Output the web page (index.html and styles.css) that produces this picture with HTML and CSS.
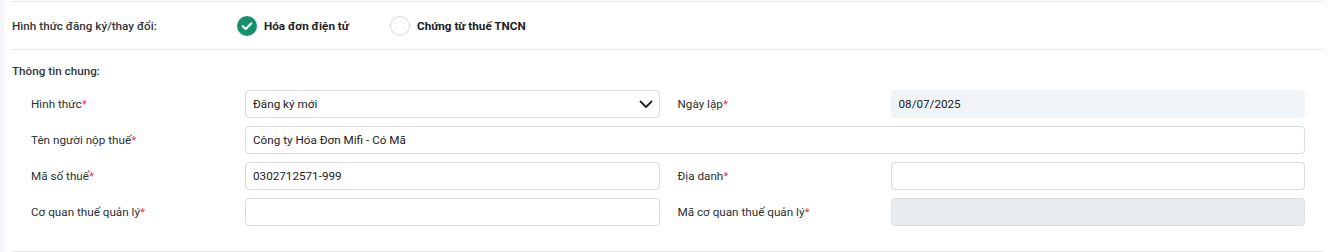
FILE: index.html
```html
<!DOCTYPE html>
<html lang="vi">

<head>
    <meta charset="utf-8" />
    <title>Đăng ký/thay đổi thông tin</title>
    <link rel="stylesheet" href="styles.css">
</head>

<body>

    <div class="card">
        <div class="reg-row">
            <div class="reg-label">Hình thức đăng ký/thay đổi:</div>
            <div class="radio-group">
                <label class="radio-item checked">
                    <span class="radio-mark">
                        <svg width="20" height="20" viewBox="0 0 20 20">
                            <circle cx="10" cy="10" r="10" fill="#17916c" />
                            <path d="M5.8 10.2 L8.7 13 L14.2 7.4" fill="none" stroke="#fff" stroke-width="2.2" stroke-linecap="round" stroke-linejoin="round" />
                        </svg>
                    </span>
                    Hóa đơn điện tử
                </label>
                <label class="radio-item">
                    <span class="radio-mark empty"></span>
                    Chứng từ thuế TNCN
                </label>
            </div>
        </div>

        <div class="section">
            <div class="section-title">Thông tin chung:</div>

            <div class="form-grid">
                <div class="field-label">Hình thức<span class="req">*</span></div>
                <div class="select-box">
                    <span>Đăng ký mới</span>
                    <svg width="14" height="14" viewBox="0 0 14 14">
                        <path d="M1.5 4.5 L7 10 L12.5 4.5" fill="none" stroke="#1f2328" stroke-width="1.8" stroke-linecap="round" stroke-linejoin="round" />
                    </svg>
                </div>
                <div class="field-label right">Ngày lập<span class="req">*</span></div>
                <div class="text-box readonly">08/07/2025</div>

                <div class="field-label">Tên người nộp thuế<span class="req">*</span></div>
                <div class="text-box wide">Công ty Hóa Đơn Mifi - Có Mã</div>

                <div class="field-label">Mã số thuế<span class="req">*</span></div>
                <div class="text-box">0302712571-999</div>
                <div class="field-label right">Địa danh<span class="req">*</span></div>
                <div class="text-box"></div>

                <div class="field-label">Cơ quan thuế quản lý<span class="req">*</span></div>
                <div class="text-box"></div>
                <div class="field-label right">Mã cơ quan thuế quản lý<span class="req">*</span></div>
                <div class="text-box disabled"></div>
            </div>
        </div>
    </div>

</body>

</html>
```

FILE: styles.css
```css
* {
    box-sizing: border-box;
    font-family: Roboto, "Noto Sans", sans-serif;
}

body {
    margin: 0;
    background: #f4f6f9;
    color: #2b2f33;
    font-size: 11.7px;
}

.card {
    margin-left: 4px;
    height: 252px;
    padding: 1px 6px 0 8px;
    background: #fff;
}

.reg-row {
    display: flex;
    align-items: center;
    height: 49px;
    border-top: 1px solid #e6e8eb;
    border-bottom: 1px solid #e6e8eb;
}

.reg-label {
    width: 225px;
    font-weight: 500;
    color: #33373b;
}

.radio-group {
    display: flex;
    align-items: center;
}

.radio-item {
    display: flex;
    align-items: center;
    gap: 7px;
    width: 153px;
    font-weight: 700;
    color: #1d2125;
}

.radio-mark {
    display: flex;
    width: 20px;
    height: 20px;
}

.radio-mark.empty {
    border: 1px solid #d3d6da;
    border-radius: 50%;
}

.section {
    height: 202px;
    border-bottom: 1px solid #e6e8eb;
}

.section-title {
    padding-top: 14px;
    height: 40px;
    line-height: 15px;
    font-weight: 500;
    color: #33373b;
}

.form-grid {
    display: grid;
    grid-template-columns: 214px 1fr 231px 1fr;
    grid-auto-rows: 28px;
    row-gap: 8px;
    padding: 0 18px 0 19px;
}

.field-label {
    display: flex;
    align-items: center;
    color: #2b2f33;
}

.field-label.right {
    padding-left: 18px;
}

.req {
    color: #e5383b;
}

.text-box,
.select-box {
    display: flex;
    align-items: center;
    padding: 0 7px;
    border: 1px solid #d9dce0;
    border-radius: 4px;
    background: #fff;
    color: #1d2125;
}

.select-box {
    justify-content: space-between;
    padding-right: 6px;
}

.text-box.wide {
    grid-column: 2 / 5;
}

.text-box.readonly {
    background: #f1f4f7;
    border-color: #f1f4f7;
}

.text-box.disabled {
    background: #e9ecef;
    border-color: #dcdfe3;
}
```
